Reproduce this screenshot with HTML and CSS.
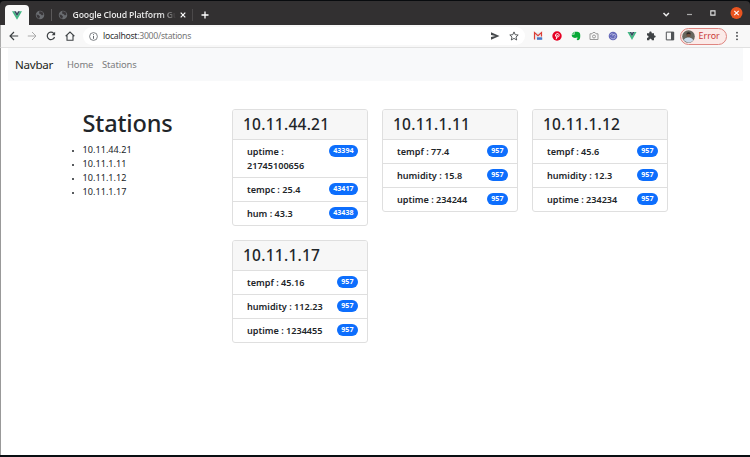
FILE: index.html
```html
<!DOCTYPE html>
<html lang="en">
<head>
<meta charset="utf-8">
<title>Stations</title>
<link rel="stylesheet" href="styles.css">
</head>
<body>
<div class="window">
  <header class="tabstrip">
    <div class="tab-active"><svg width="10" height="9" viewBox="0 0 20 17"><path fill="#41b883" d="M0 0h4l6 10 6-10h4L10 17z"/><path fill="#35495e" d="M4 0h4l2 4 2-4h4l-6 10z"/></svg></div>
    <div class="tab-small"><svg width="10" height="10" viewBox="0 0 20 20"><circle cx="10" cy="10" r="8.500" fill="#696c70"/><path d="M3 9l4 1 3 3-2 5-4-4zm6-7l6 2 2 5-3 2-3-3-3-1z" fill="#393639"/></svg></div>
    <div class="tab-title">
      <svg width="10" height="10" viewBox="0 0 20 20"><circle cx="10" cy="10" r="8.500" fill="#696c70"/><path d="M3 9l4 1 3 3-2 5-4-4zm6-7l6 2 2 5-3 2-3-3-3-1z" fill="#393639"/></svg>
      <span class="title">Google Cloud Platform Gu</span>
      <svg class="close-tab" width="6" height="6" viewBox="0 0 6 6"><path d="M.7.7l4.600 4.600M5.300.7L.7 5.300" stroke="#fff" stroke-width="1.200"/></svg>
    </div>
    <svg class="plus" width="8" height="8" viewBox="0 0 8 8"><path d="M4 .5v7M.5 4h7" stroke="#fff" stroke-width="1.300"/></svg>
    <div class="controls">
      <svg width="24" height="14" viewBox="0 0 24 14"><path d="M9.500 7l2.700 2.700L14.900 7" fill="none" stroke="#eee" stroke-width="1.500"/></svg>
      <svg width="23" height="14" viewBox="0 0 23 14"><path d="M9 8.500h5" stroke="#aaa" stroke-width="1.200"/></svg>
      <svg width="24" height="14" viewBox="0 0 24 14"><path d="M9.800 4.900h4.200v4.200H9.800z" fill="none" stroke="#e4e4e4" stroke-width="1.100"/></svg>
      <svg width="23" height="14" viewBox="0 0 23 14"><circle cx="11.500" cy="7" r="6" fill="#e95420"/><path d="M9.300 4.800l4.400 4.400m0-4.400L9.300 9.200" stroke="#fff" stroke-width="1.100"/></svg>
    </div>
  </header>

  <div class="toolbar">
    <div class="nav-icons">
      <svg viewBox="0 0 10 10"><path d="M9.200 5H1.200M5 1L1 5l4 4" fill="none" stroke="#3c4043" stroke-width="1.150"/></svg>
      <svg viewBox="0 0 10 10"><path d="M.8 5h8M5 1l4 4-4 4" fill="none" stroke="#aaa" stroke-width="1"/></svg>
      <svg viewBox="0 0 10 10"><path d="M8.500 6A3.700 3.700 0 1 1 7.700 2.400L8.600 3.400" fill="none" stroke="#3c4043" stroke-width="1.200"/><path d="M9.100.8v3.500H5.600z" fill="#3c4043"/></svg>
      <svg viewBox="0 0 10 10"><path d="M.6 5.200L5 1l4.400 4.200M2 4.300v4.900h6V4.300" fill="none" stroke="#3c4043" stroke-width="1.100"/></svg>
    </div>
    <div class="omnibox">
      <svg width="9" height="9" viewBox="0 0 9 9"><circle cx="4.500" cy="4.500" r="3.900" fill="none" stroke="#5f6368" stroke-width=".8"/><path d="M4.500 4v2.800M4.500 2.200v1" stroke="#5f6368"/></svg>
      <span class="url"><span class="host">localhost</span>:3000/stations</span>
      <svg class="send" width="10" height="10" viewBox="0 0 10 10"><path d="M1 1.200L9.500 5 1 8.800V6l4.500-1L1 4z" fill="#46494c"/></svg>
      <svg class="star" width="10" height="10" viewBox="0 0 10 10"><path d="M5 .9l1.200 2.800 3 .3L7 6l.7 3L5 7.400 2.300 9 3 6 .8 4l3-.3z" fill="none" stroke="#46494c" stroke-width=".9"/></svg>
    </div>
    <div class="extensions">
      <svg viewBox="0 0 10 10"><path d="M1 1.500h8v7H1z" fill="#e6e9ef"/><path d="M1.500 8.500v-7L5 4.600l3.500-3.100v4" fill="none" stroke="#dc3d35" stroke-width="1.200"/><path d="M4 6.300h5.200v2.500H4z" fill="#4776c5"/></svg>
      <svg viewBox="0 0 10 10"><circle cx="5" cy="5" r="4.700" fill="#e60023"/><path d="M4.200 8.200l1.100-4.200M3.600 5.500C2.500 2.300 7.200 1.500 7.100 4.200 7 6.300 5.400 6.500 4.900 5.700" fill="none" stroke="#fff" stroke-width="1"/></svg>
      <svg viewBox="0 0 10 10"><path d="M3.500.7l2.800.1C9 1 9.500 3 9.200 6.200 9 9.500 6 9.900 5.700 8.200c0-1 .8-1.200 1.500-1C5.500 5.500 5 8 2.300 6.600 1 6 .7 4.700.7 3.500H3.500z" fill="#08a836"/><path d="M.9 2.800L2.900.9v1.900z" fill="#08a836"/></svg>
      <svg viewBox="0 0 10 10"><path d="M1 2.800h2l1-1.300h2l1 1.300h2v5.700H1z" fill="none" stroke="#999" stroke-width="1"/><circle cx="5" cy="5.500" r="1.500" fill="none" stroke="#999"/></svg>
      <svg viewBox="0 0 10 10"><circle cx="5" cy="5" r="4.300" fill="#6468b8"/><path d="M2 4.200c2-3 4-1 2.500 1M5 3.500c3-1 3.500 2 1.200 2.500M2.500 6.500c2 2 4 1.500 5-.2" fill="none" stroke="#c8caeb" stroke-width=".8"/></svg>
      <svg viewBox="0 0 20 20"><path fill="#41b883" d="M1 2h4l5 9 5-9h4l-9 16z"/><path fill="#35495e" d="M5 2h4l1 3 1-3h4l-5 9z"/></svg>
      <svg viewBox="0 0 10 10"><path d="M1 2.200h2.300C2.800-.2 6 -.2 5.700 2.200H8v2.300c2.200-.3 2.200 2.500 0 2.300v2.500H5.800c0-2-2.600-2-2.500 0H1V6.900c2 0 2-2.300 0-2.300z" fill="#404346"/></svg>
      <svg viewBox="0 0 10 10"><path d="M1.300 1.100h7.400v7.800H1.300z" fill="none" stroke="#505356" stroke-width="1"/><path d="M6 1h3v8H6z" fill="#505356"/></svg>
    </div>
    <div class="profile">
      <svg width="13" height="13" viewBox="0 0 13 13"><circle cx="6.500" cy="6.500" r="6.300" fill="#68675f"/><path d="M1.500 10Q3 7.800 5.500 7.500h2Q10.500 8 11.500 10.300 6.500 14.800 1.500 10" fill="#cbdcec"/><circle cx="6.500" cy="4.900" r="2.200" fill="#70503f"/><path d="M4.300 4.500Q4.500 2 6.800 2.300 9 2.400 8.700 4.500L7 3.700z" fill="#292526"/></svg>
      <span>Error</span>
    </div>
    <svg class="menu" width="4" height="10" viewBox="0 0 4 10"><circle cx="2" cy="1.700" r=".9"/><circle cx="2" cy="5" r=".9"/><circle cx="2" cy="8.300" r=".9"/></svg>
  </div>

  <main class="page">
    <nav class="navbar"><a class="brand">Navbar</a><a class="home">Home</a><a>Stations</a></nav>
    <div class="content">
      <aside>
        <h1>Stations</h1>
        <ul><li>10.11.44.21</li><li>10.11.1.11</li><li>10.11.1.12</li><li>10.11.1.17</li></ul>
      </aside>
      <section class="cards">
        <article class="card"><h2>10.11.44.21</h2>
          <div class="row tall"><b>uptime :<br>21745100656</b><span class="badge">43394</span></div>
          <div class="row"><b>tempc : 25.4</b><span class="badge">43417</span></div>
          <div class="row"><b>hum : 43.3</b><span class="badge">43438</span></div></article>
        <article class="card"><h2>10.11.1.11</h2>
          <div class="row"><b>tempf : 77.4</b><span class="badge">957</span></div>
          <div class="row"><b>humidity : 15.8</b><span class="badge">957</span></div>
          <div class="row"><b>uptime : 234244</b><span class="badge">957</span></div></article>
        <article class="card"><h2>10.11.1.12</h2>
          <div class="row"><b>tempf : 45.6</b><span class="badge">957</span></div>
          <div class="row"><b>humidity : 12.3</b><span class="badge">957</span></div>
          <div class="row"><b>uptime : 234234</b><span class="badge">957</span></div></article>
        <article class="card"><h2>10.11.1.17</h2>
          <div class="row"><b>tempf : 45.16</b><span class="badge">957</span></div>
          <div class="row"><b>humidity : 112.23</b><span class="badge">957</span></div>
          <div class="row"><b>uptime : 1234455</b><span class="badge">957</span></div></article>
      </section>
    </div>
  </main>
</div>
</body>
</html>
```
FILE: styles.css
```css
* { box-sizing: border-box; }
body { margin: 0; background: #080b0e; font-family: "Noto Sans", sans-serif; color: #212529; }
svg { display: block; flex: none; }
.window { height: 457px; display: flex; flex-direction: column; padding-top: 1px; border-bottom: 2px solid #090e12; overflow: hidden; }

.tabstrip { height: 24px; flex: none; display: flex; align-items: center; background: #323031; border-radius: 4px 4px 0 0; padding-left: 5px; }
.tab-active { width: 24px; height: 20px; align-self: flex-end; background: #f8f8f8; border-radius: 4px 4px 0 0; display: flex; align-items: center; justify-content: center; }
.tab-small { width: 23px; height: 12px; border-right: 1px solid #5b595a; display: flex; align-items: center; padding-left: 6px; margin-top: 4px; }
.tab-title { width: 141px; height: 12px; border-right: 1px solid #4b494a; display: flex; align-items: center; padding-left: 6px; margin-top: 4px; }
.title { width: 103px; margin-left: 4.500px; white-space: nowrap; font-size: 8.700px; line-height: 14px; font-weight: 600; letter-spacing: -.18px; color: transparent; background: linear-gradient(90deg, #e8e8e8 86%, #323031 100%); background-clip: text; -webkit-background-clip: text; }
.close-tab { margin-left: 4px; }
.plus { margin-left: 8px; margin-top: 4px; }
.controls { display: flex; margin-left: auto; padding-right: 2px; }

.toolbar { height: 23px; flex: none; display: flex; align-items: center; background: #f8f8f8; border-bottom: 1px solid #e1e1e1; border-left: 1px solid #aaa; }
.nav-icons { display: flex; gap: 8.800px; padding-left: 7.500px; width: 82px; }
.nav-icons svg, .extensions svg { width: 10px; height: 10px; }
.omnibox { width: 442px; height: 18px; border-radius: 9px; background: #fff; display: flex; align-items: center; padding-left: 6px; }
.url { margin-left: 5px; font-size: 8.700px; line-height: 14px; letter-spacing: -.28px; color: #777; }
.host { color: #303234; }
.send { margin-left: auto; }
.star { margin: 0 6px 0 9px; }
.extensions { display: flex; gap: 8.800px; margin-left: 8px; }
.profile { display: flex; align-items: center; gap: 4px; width: 47px; height: 17px; margin-left: 5px; padding-left: 1px; border: 1px solid #df8580; border-radius: 9px; background: #fbeae8; color: #c93a38; font-size: 8.900px; line-height: 14px; }
.menu { margin-left: 8px; fill: #404346; }

.page { flex: 1; min-height: 0; background: #fff; border-left: 1px solid #999; padding: 0 7px; }
.navbar { height: 33px; display: flex; align-items: center; background: #f8f9fa; padding-left: 7px; font-size: 9.400px; letter-spacing: -.12px; color: #7b7c7d; }
.brand { width: 52px; font-size: 11.600px; letter-spacing: -.25px; color: #1d1f20; }
.home { width: 35px; }
.content { display: flex; padding: 28px 0 0 74.500px; }
aside { width: 149.500px; }
h1 { margin: 0 0 5px; font-size: 23.500px; line-height: 29px; font-weight: 500; letter-spacing: -.15px; }
ul { margin: 0; padding: 0; font-size: 9.100px; line-height: 14.100px; letter-spacing: .03px; }
li::marker { font-size: 7px; }
.cards { display: grid; grid-template-columns: repeat(3, 136px); column-gap: 14px; row-gap: 14px; align-items: start; }
.card { border: 1px solid #dfdfdf; border-radius: 3px; overflow: hidden; }
h2 { margin: 0; height: 29px; padding-left: 10px; background: #f7f7f7; font-size: 15.500px; line-height: 29px; font-weight: 500; letter-spacing: .25px; }
.row { height: 24px; display: flex; justify-content: space-between; align-items: flex-start; padding: 5px 9px 0 14px; border-top: 1px solid #dfdfdf; }
.row b { font-size: 9.100px; line-height: 14px; font-weight: 600; white-space: nowrap; }
.tall { height: 38px; }
.badge { height: 12px; padding: 0 4.500px; border-radius: 6px; background: #0d6efd; color: #fff; font-size: 7.100px; line-height: 11.500px; font-weight: 700; }
```
